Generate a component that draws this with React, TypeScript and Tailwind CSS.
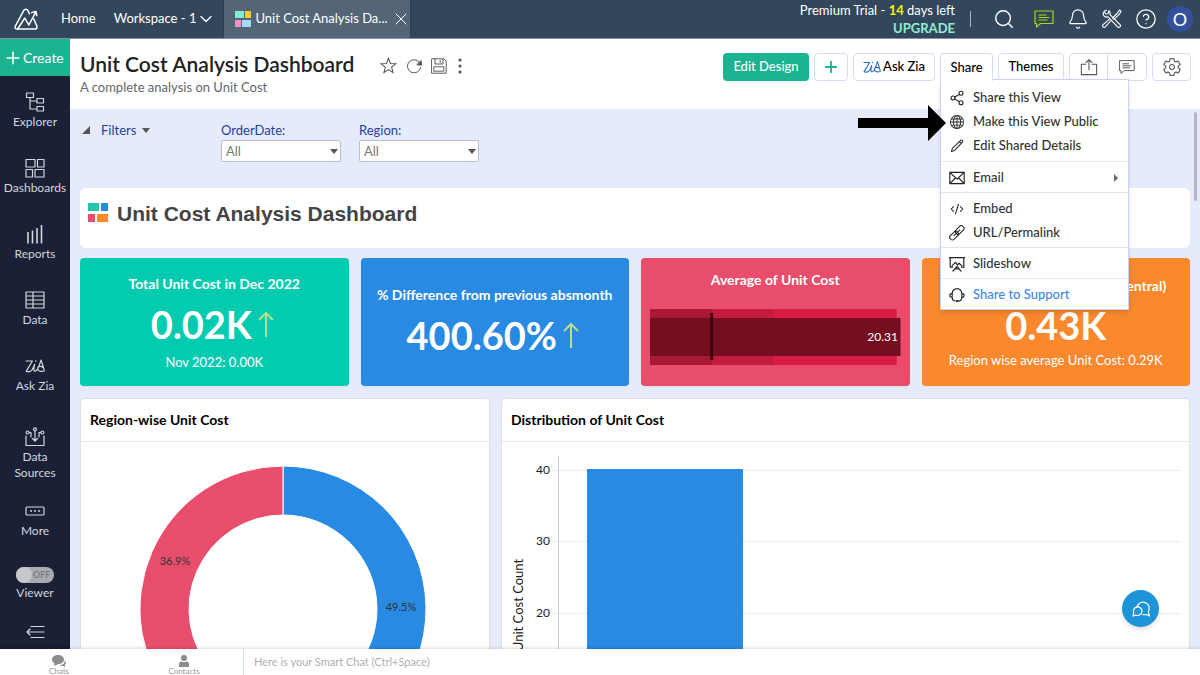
import React from "react";
import { Bell, ChevronDown, CircleHelp, CodeXml, Plus, Search, Share2, X } from "lucide-react";
import { BsGlobe } from "react-icons/bs";
import { IoSettingsOutline } from "react-icons/io5";

type IconProps = { className?: string };

function Svg({
  className,
  box = "0 0 20 20",
  children,
}: IconProps & { box?: string; children: React.ReactNode }) {
  return (
    <svg
      viewBox={box}
      fill="none"
      stroke="currentColor"
      strokeWidth="1.2"
      strokeLinejoin="round"
      strokeLinecap="round"
      className={className}
      aria-hidden="true"
    >
      {children}
    </svg>
  );
}

const LogoIcon = () => (
  <Svg box="0 0 24 22" className="h-[22px] w-6">
    <path
      strokeWidth="1.5"
      d="M19.800 11 22.800 18C23.400 19.800 22.600 21 21 21H3.200C1.200 21 .6 19.600 1.400 18L9.800 2.400C10.600.8 13 .8 13.800 2.400L15.400 5.800"
    />
    <path strokeWidth="1.500" d="M4 20.500 10.800 10 14.800 17 21.400 4.800M17.800 4.600 22 3.600 22.800 7.600" />
  </Svg>
);

const TilesIcon = ({ className }: IconProps) => (
  <svg viewBox="0 0 20 20" className={className} aria-hidden="true">
    <rect x="0" y="1" width="11" height="8" fill="#1fc8ad" />
    <rect x="13" y="1" width="7" height="8" fill="#288ae2" />
    <rect x="0" y="12" width="7" height="8" fill="#e84e6c" />
    <rect x="9" y="12" width="11" height="8" fill="#fa882d" />
  </svg>
);

const ZiaIcon = ({ className }: IconProps) => (
  <Svg box="0 0 20 16" className={className}>
    <path d="M1 3H7.400L1.200 13.400C4.600 14.600 7 13.200 8.200 9.800L9.600 6.400C8.600 10.600 8.400 13.600 10.400 13.200 13 12.600 14.200 8 16 2 17.200 5.600 18.800 9.800 19.200 13 15.400 14.200 12.200 12.600 12.600 10.200 13 8 16.200 7.800 18 9.600" />
    <path strokeWidth="1.500" d="M10.800 2.900v.1" />
  </Svg>
);

const ExplorerIcon = () => (
  <Svg className="h-5 w-5">
    <path d="M1.5 1h7v4.500h-7zM12 6.500h6.500v4.500H12zM12 14.500h6.500v4.500H12zM5 5.500v11.500h7M5 9h7" />
  </Svg>
);

const DashboardsIcon = () => (
  <Svg className="h-5 w-5">
    <path d="M1 1.500h9v7.500H1zM12.500 1.500H19v7.500h-6.500zM1 11.500h6.500v7.500H1zM10 11.500h9v7.500h-9z" />
  </Svg>
);

const ReportsIcon = () => (
  <Svg className="h-5 w-5">
    <path strokeWidth="1.600" strokeLinecap="butt" d="M3 8v11.500M7.500 6.500v13M12 4v15.500M16.500 1v18.500" />
  </Svg>
);

const DataIcon = () => (
  <Svg className="h-5 w-5">
    <path d="M1 2h18v16H1zM1 6h18M1 10h18M1 14h18M8 2v16" />
  </Svg>
);

const SourcesIcon = () => (
  <Svg className="h-5 w-5">
    <path d="M1 9v9.500h18V9M10 4v10M7.500 11.500 10 14l2.500-2.500M4.400 5.500H6V10M15.600 5.500H14V10" />
    <circle cx="10" cy="2.300" r="1.500" />
    <circle cx="2.600" cy="5.500" r="1.500" />
    <circle cx="17.400" cy="5.500" r="1.500" />
  </Svg>
);

const MoreIcon = () => (
  <Svg className="h-5 w-5">
    <rect x="1" y="6" width="18" height="8" rx="1" />
    <path strokeWidth="1.800" d="M6 10h.1M10 10h.1M14 10h.1" />
  </Svg>
);

const CommentIcon = ({ className }: IconProps) => (
  <Svg className={className}>
    <path d="M1 2h18v12.500H6.500L2.500 18v-3.500H1zM5 6h7M5 8.500h10M5 11h8" />
  </Svg>
);

const ToolsIcon = () => (
  <Svg className="h-5 w-5">
    <path
      strokeWidth="1.100"
      d="M4.500 1.200a4 4 0 0 0-3.300 4.600 4 4 0 0 0 4.800 2L15.600 17.800a1.600 1.600 0 0 0 2.400-2.200L8 5.600a4 4 0 0 0-1.200-4L6.200 4.500 4 5 2.800 3.500M17.500 1l1.500 1.500-2 3.200-5 4.600-1.300-1.300 4.700-5zM8.500 12l-5.200 5.900a1.500 1.500 0 0 1-2.200-2.200L7 10.600"
    />
  </Svg>
);

const StarIcon = () => (
  <Svg className="h-[17px] w-[17px]">
    <path strokeWidth="1.200" strokeLinejoin="miter" d="M10 1.500 12.300 7.600 18.800 7.900 13.700 12 15.400 18.300 10 14.700 4.600 18.300 6.300 12 1.200 7.900 7.700 7.600z" />
  </Svg>
);

const RefreshIcon = () => (
  <Svg className="h-4 w-4">
    <path strokeWidth="1.200" d="M17.500 6.500A8.300 8.300 0 1 0 18.300 12" />
    <path fill="currentColor" d="m19 3.500.3 5.500-5.300-.6z" />
  </Svg>
);

const SaveIcon = () => (
  <Svg className="h-4 w-4">
    <path strokeWidth="1.200" d="M1 1h15l3 3v15H1zM5 1v6.500h10V1M11.500 3v2.500M4 11h12v5.500H4z" />
  </Svg>
);

const ExportIcon = () => (
  <Svg className="h-[18px] w-[18px]">
    <path d="M6.500 7H1.500v11.500h17V7h-5M10 13V2M6.800 5 10 1.800 13.200 5" />
  </Svg>
);

const PencilIcon = () => (
  <Svg className="h-4 w-4">
    <path strokeWidth="1.300" d="M3 17l1.200-4L14.600 3c1.400-1.200 3.400.7 2.300 2.100L6.900 15.600zM13 4.600l2.200 2.200" />
  </Svg>
);

const LinkIcon = () => (
  <Svg className="h-4 w-4">
    <g transform="rotate(-45 10 10)" strokeWidth="1.300">
      <rect x="-1" y="6.500" width="12" height="6.500" rx="2.500" />
      <rect x="9" y="6.500" width="12" height="6.500" rx="2.500" />
      <path d="M5 9.800h10" />
    </g>
  </Svg>
);

const MailIcon = () => (
  <Svg className="h-4 w-4">
    <path strokeWidth="1.400" d="M1 3h18v14H1zM1 3l9 8.500L19 3M1 17l7-7M19 17l-7-7" />
  </Svg>
);

const SlideshowIcon = () => (
  <Svg className="h-4 w-4">
    <path strokeWidth="1.500" d="M4.500 14H1.500V2h17v12h-3M.5 2h19M4 12l4-4 2.500 3 2-2 3.500 3M10 13l-5 6M10 13l5 6M7.500 16h5" />
  </Svg>
);

const SupportIcon = () => (
  <Svg className="h-4 w-4">
    <path strokeWidth="1.400" d="M4 13V8a6 6 0 0 1 12 0v5M4 8c-4 .5-4 5 0 5M16 8c4 .5 4 5 0 5M16 13c0 3-2 4.500-4.500 4.500M4 13c0 2.500 1.500 4 3.500 4.500" />
    <circle cx="10" cy="17.500" r="1" fill="currentColor" />
  </Svg>
);

const navItems = [
  { label: "Explorer", icon: <ExplorerIcon /> },
  { label: "Dashboards", icon: <DashboardsIcon /> },
  { label: "Reports", icon: <ReportsIcon /> },
  { label: "Data", icon: <DataIcon /> },
  { label: "Ask Zia", icon: <ZiaIcon className="h-5 w-5" /> },
];

type MenuItem = {
  label: string;
  icon: React.ReactNode;
  arrow?: boolean;
  submenu?: boolean;
  highlight?: boolean;
};

const menuGroups: MenuItem[][] = [
  [
    { label: "Share this View", icon: <Share2 className="h-4 w-4" strokeWidth={1.6} /> },
    { label: "Make this View Public", icon: <BsGlobe className="h-3.5 w-3.5" />, arrow: true },
    { label: "Edit Shared Details", icon: <PencilIcon /> },
  ],
  [{ label: "Email", icon: <MailIcon />, submenu: true }],
  [
    { label: "Embed", icon: <CodeXml className="h-3.5 w-3.5" strokeWidth={1.8} /> },
    { label: "URL/Permalink", icon: <LinkIcon /> },
  ],
  [{ label: "Slideshow", icon: <SlideshowIcon /> }],
  [{ label: "Share to Support", icon: <SupportIcon />, highlight: true }],
];

function TopBar() {
  return (
    <header className="flex h-[39px] shrink-0 items-center border-b border-[#8793a3] bg-[#33475c] text-[13px] text-white">
      <a href="#" aria-label="Analytics home" className="ml-3.5">
        <LogoIcon />
      </a>
      <a href="#" className="ml-[23px]">
        Home
      </a>
      <button className="ml-[18px] flex items-center">
        Workspace - 1
        <ChevronDown className="h-5 w-5" strokeWidth={1.6} />
      </button>
      <div className="ml-[7px] flex h-full w-[188px] items-center border-x border-[#2b3d50] bg-[#536577] pl-[11px]">
        <svg viewBox="0 0 16 16" className="h-4 w-4 shrink-0" aria-hidden="true">
          <rect width="9" height="7" fill="#7eedcb" />
          <rect x="10" width="6" height="7" fill="#fac932" />
          <rect y="9" width="6" height="7" fill="#f58fc9" />
          <rect x="7" y="9" width="9" height="7" fill="#a6d8f7" />
        </svg>
        <span className="ml-1 whitespace-nowrap">Unit Cost Analysis Da...</span>
        <button aria-label="Close tab" className="ml-[3px]">
          <X className="h-5 w-5" strokeWidth={1.2} />
        </button>
      </div>

      <div className="ml-auto flex items-center">
        <div className="text-right leading-[18px]">
          <p>
            Premium Trial - <b className="text-[#f5f50a]">14</b> days left
          </p>
          <a href="#" className="block font-bold text-[#8ff0d0]">
            UPGRADE
          </a>
        </div>
        <span className="ml-[15px] h-4 w-px bg-[#a8b2bd]" />
        <button aria-label="Search" className="ml-[22px]">
          <Search className="h-[22px] w-[22px]" strokeWidth={1.6} />
        </button>
        <button aria-label="Messages" className="ml-[19px] text-[#a5d610]">
          <CommentIcon className="h-5 w-5" />
        </button>
        <button aria-label="Notifications" className="ml-[13px]">
          <Bell className="h-[22px] w-[22px]" strokeWidth={1.3} />
        </button>
        <button aria-label="Tools" className="ml-[13px]">
          <ToolsIcon />
        </button>
        <button aria-label="Help" className="ml-[13px]">
          <CircleHelp className="h-[22px] w-[22px]" strokeWidth={1.4} />
        </button>
        <button className="mr-[7px] ml-[10px] h-[26px] w-[26px] rounded-full bg-[#33509c] text-lg leading-none">
          O
        </button>
      </div>
    </header>
  );
}

function NavLink({ label, icon }: { label: string; icon: React.ReactNode }) {
  return (
    <a href="#" className="flex flex-col items-center gap-0.5 text-center text-xs leading-4">
      {icon}
      {label}
    </a>
  );
}

function Sidebar() {
  return (
    <aside className="flex w-[70px] shrink-0 flex-col overflow-hidden bg-[#1a2035] text-[#d3d6dc]">
      <button className="flex h-[37px] shrink-0 items-center bg-[#1cb391] pl-[3px] text-sm text-white">
        <Plus className="h-5 w-5" strokeWidth={1.8} />
        Create
      </button>
      <nav className="flex flex-col px-1 pt-4">
        <div className="flex flex-col gap-7">
          {navItems.map((item) => (
            <NavLink key={item.label} {...item} />
          ))}
        </div>
        <div className="mt-[33px] flex flex-col gap-5">
          <NavLink label="Data Sources" icon={<SourcesIcon />} />
          <NavLink label="More" icon={<MoreIcon />} />
        </div>
      </nav>
      <label className="mt-7 flex flex-col items-center gap-0.5 text-xs leading-4">
        <input type="checkbox" className="peer sr-only" />
        <span className="flex h-4 w-[38px] items-center rounded-full bg-[#a9abb0] text-[9px] text-[#6d7077]">
          <span className="mr-px h-4 w-4 shrink-0 rounded-full bg-[#c6c7ca]" />
          OFF
        </span>
        Viewer
      </label>
      <button aria-label="Collapse menu" className="mx-auto mt-[21px]">
        <Svg className="h-5 w-5">
          <path d="M6 4.500h13M2 10h17M6 15.500h13M5 7l-3 3 3 3" />
        </Svg>
      </button>
    </aside>
  );
}

function ShareMenu() {
  return (
    <div
      role="menu"
      className="absolute top-[26px] left-0 z-10 w-[189px] border border-[#c9d3f0] bg-white text-[13px] text-[#333] shadow-md"
    >
      {menuGroups.map((group, index) => (
        <div key={index} className="border-t border-[#e6e6e6] pt-1 pb-0.5 first:border-t-0 first:pt-1.5 first:pb-[3px]">
          {group.map((item) => (
            <button
              key={item.label}
              role="menuitem"
              className={
                item.highlight
                  ? "relative flex h-6 w-full items-center gap-2 px-2 text-[#3f87e5]"
                  : "relative flex h-6 w-full items-center gap-2 px-2"
              }
            >
              <span className="flex w-4 justify-center text-[#222]">{item.icon}</span>
              {item.label}
              {item.submenu && (
                <svg viewBox="0 0 4 8" className="mr-0.5 ml-auto h-2 w-1" aria-hidden="true">
                  <path d="M0 0 4 4 0 8z" fill="#666" />
                </svg>
              )}
              {item.arrow && (
                <svg viewBox="0 0 88 36" className="absolute top-[-5px] right-[182px] h-9 w-[88px]" aria-hidden="true">
                  <path d="M0 13H70V0L88 18 70 36V23H0z" fill="#000" />
                </svg>
              )}
            </button>
          ))}
        </div>
      ))}
    </div>
  );
}

function Toolbar() {
  return (
    <div className="flex h-7 items-stretch gap-[5px] text-[13px] font-medium text-black">
      <button className="w-[86px] rounded-sm bg-[#1cb391] text-white">Edit Design</button>
      <button aria-label="Add" className="flex w-[34px] items-center justify-center rounded-sm border border-[#d5dcf3] text-[#1cb391]">
        <Plus className="h-[18px] w-[18px]" strokeWidth={2.5} />
      </button>
      <button className="flex w-[82px] items-center justify-center gap-0.5 rounded-sm border border-[#d5dcf3]">
        <ZiaIcon className="h-4 w-[18px] text-[#2c6cc4]" />
        Ask Zia
      </button>
      <div className="relative flex">
        <button aria-haspopup="menu" className="relative z-20 w-[53px] rounded-t-sm border border-b-0 border-[#d5dcf3] bg-white">
          Share
        </button>
        <ShareMenu />
      </div>
      <button className="w-[66px] rounded-sm border border-[#d5dcf3]">Themes</button>
      <div className="flex rounded-sm border border-[#d5dcf3] text-[#555]">
        <button aria-label="Export" className="flex w-[38px] items-center justify-center border-r border-[#d5dcf3]">
          <ExportIcon />
        </button>
        <button aria-label="Comments" className="flex w-[38px] items-center justify-center">
          <CommentIcon className="h-4 w-4" />
        </button>
      </div>
      <button aria-label="Settings" className="flex w-[39px] items-center justify-center rounded-sm border border-[#d5dcf3] text-[#666]">
        <IoSettingsOutline className="h-5 w-5" />
      </button>
    </div>
  );
}

function ViewHeader() {
  return (
    <div className="flex h-[70px] shrink-0 items-start bg-white pr-[9px] pl-[10px]">
      <div>
        <h1 className="mt-[11px] text-[21px] leading-7 font-semibold text-[#222]">Unit Cost Analysis Dashboard</h1>
        <p className="text-[13px] leading-[18px] text-[#666]">A complete analysis on Unit Cost</p>
      </div>
      <div className="mt-[18px] ml-[26px] flex items-center gap-[9px] text-[#555]">
        <button aria-label="Favourite">
          <StarIcon />
        </button>
        <button aria-label="Refresh">
          <RefreshIcon />
        </button>
        <button aria-label="Save">
          <SaveIcon />
        </button>
        <button aria-label="More options">
          <svg viewBox="0 0 4 16" className="ml-0.5 h-4 w-1" fill="currentColor" aria-hidden="true">
            <circle cx="2" cy="2" r="1.6" />
            <circle cx="2" cy="8" r="1.6" />
            <circle cx="2" cy="14" r="1.6" />
          </svg>
        </button>
      </div>
      <div className="mt-[14px] ml-auto">
        <Toolbar />
      </div>
    </div>
  );
}

function FilterSelect({ id, label }: { id: string; label: string }) {
  return (
    <div className="w-[120px]">
      <label htmlFor={id} className="block text-[13px] leading-5 text-[#27429b]">
        {label}
      </label>
      <div className="relative">
        <select
          id={id}
          className="block h-[22px] w-full appearance-none rounded-xs border border-[#b9bfd0] bg-white pl-1 text-[13px] leading-5 text-[#777]"
        >
          <option>All</option>
        </select>
        <svg viewBox="0 0 8 5" className="pointer-events-none absolute top-[9px] right-[3px] h-[5px] w-2" aria-hidden="true">
          <path d="M0 0h8L4 5z" fill="#555" />
        </svg>
      </div>
    </div>
  );
}

function Filters() {
  return (
    <div className="flex h-[68px] items-start">
      <svg viewBox="0 0 8 8" className="mt-1.5 ml-0.5 h-2 w-2" aria-hidden="true">
        <path d="M8 0v8H0z" fill="#555" />
      </svg>
      <button className="ml-[11px] flex w-[120px] items-center gap-1.5 text-[13px] leading-5 text-[#27429b]">
        Filters
        <svg viewBox="0 0 8 5" className="h-[5px] w-2" aria-hidden="true">
          <path d="M0 0h8L4 5z" fill="#555" />
        </svg>
      </button>
      <div className="flex gap-[18px]">
        <FilterSelect id="order-date" label="OrderDate:" />
        <FilterSelect id="region" label="Region:" />
      </div>
    </div>
  );
}

const TrendUp = () => (
  <svg viewBox="0 0 16 26" className="h-[26px] w-4" fill="none" stroke="#b5e08a" strokeWidth="2" aria-label="Up">
    <path d="M8 26V2M1 9l7-7 7 7" />
  </svg>
);

function KpiCard({
  title,
  value,
  note,
  up,
  color,
}: {
  title: string;
  value: string;
  note?: string;
  up?: boolean;
  color: string;
}) {
  return (
    <section className={`flex h-32 flex-col items-center justify-center rounded-sm text-white shadow-xs ${color}`}>
      <h2 className={note ? "text-sm leading-5 font-bold whitespace-nowrap" : "pt-1.5 text-sm leading-5 font-bold whitespace-nowrap"}>
        {title}
      </h2>
      <div className={up ? "flex h-[60px] items-center gap-1.5 pr-1" : "flex h-14 items-center pt-0.5"}>
        <strong className="text-[38px] leading-none font-bold">{value}</strong>
        {up && <TrendUp />}
      </div>
      {note && <p className="text-[13px] leading-4 whitespace-nowrap">{note}</p>}
    </section>
  );
}

function BulletCard() {
  return (
    <section className="flex h-32 flex-col rounded-sm bg-[#e84e6c] px-[9px] pt-3 text-white shadow-xs">
      <h2 className="text-center text-sm leading-5 font-bold">Average of Unit Cost</h2>
      <svg className="mt-[19px] h-14 w-full" aria-label="Average of Unit Cost 20.31">
        <rect width="98.500%" height="56" fill="#d71d44" />
        <rect width="49.300%" height="56" fill="#c41b3e" />
        <rect width="24.600%" height="56" fill="#a91935" />
        <rect y="9" width="100%" height="38" fill="#750e21" />
        <rect x="24%" y="4" width="3" height="47" fill="#3b0510" />
        <text x="99%" y="32" textAnchor="end" fill="#fff" className="text-xs">
          20.31
        </text>
      </svg>
    </section>
  );
}

function ChartPanel({ title, children }: { title: string; children: React.ReactNode }) {
  return (
    <section className="rounded-sm border border-[#dcdfe8] bg-white">
      <h2 className="border-b border-[#e5e5e5] px-[9px] text-sm leading-[42px] font-bold text-black">{title}</h2>
      {children}
    </section>
  );
}

const OUTER = 143;
const INNER = 94;

const slices = [
  { share: 49.5, color: "#288ae2" },
  { share: 13.6, color: "#fa882d" },
  { share: 36.9, color: "#e84e6c" },
];

function arc(from: number, to: number) {
  const point = (radius: number, pct: number) => {
    const angle = (pct / 100) * Math.PI * 2;
    return `${radius * Math.sin(angle)} ${-radius * Math.cos(angle)}`;
  };
  const large = to - from > 50 ? 1 : 0;
  return `M${point(OUTER, from)}A${OUTER} ${OUTER} 0 ${large} 1 ${point(OUTER, to)}L${point(INNER, to)}A${INNER} ${INNER} 0 ${large} 0 ${point(INNER, from)}Z`;
}

function DonutChart() {
  let start = 0;
  return (
    <svg viewBox="0 0 404 334" className="mx-auto h-[334px] w-[404px]" aria-label="Region-wise Unit Cost">
      <g transform="translate(200 167)">
        {slices.map((slice) => {
          const from = start;
          start += slice.share;
          return <path key={slice.color} d={arc(from, start)} fill={slice.color} stroke="#fff" />;
        })}
        <g fill="#333" textAnchor="middle" className="text-[11px]">
          <text x="-108" y="-44">36.9%</text>
          <text x="118" y="2">49.5%</text>
        </g>
      </g>
    </svg>
  );
}

const ticks = [
  { label: 40, y: 28 },
  { label: 30, y: 99 },
  { label: 20, y: 171 },
  { label: 10, y: 243 },
];

function Histogram() {
  return (
    <svg className="h-[334px] w-full" aria-label="Distribution of Unit Cost">
      {ticks.map((tick) => (
        <g key={tick.label}>
          <line x1="50" x2="98.800%" y1={tick.y + 0.5} y2={tick.y + 0.5} stroke="#ececec" />
          <text x="48" y={tick.y + 4} textAnchor="end" fill="#222" className="text-xs">
            {tick.label}
          </text>
        </g>
      ))}
      <line x1="56.500" x2="56.500" y1="14" y2="315" stroke="#cfcfcf" />
      <rect x="85" y="27" width="156" height="288" fill="#288ae2" />
      <text transform="translate(21 163) rotate(-90)" textAnchor="middle" fill="#222" className="text-[13px]">
        Unit Cost Count
      </text>
    </svg>
  );
}

function SmartBar() {
  return (
    <footer className="z-20 flex h-[26px] shrink-0 bg-white text-[#999] shadow-[0_-1px_3px_rgba(0,0,0,0.15)]">
      <div className="flex w-[244px] border-r border-[#ddd] text-[8px] leading-2">
        <button className="flex w-[118px] flex-col items-center justify-end">
          <svg viewBox="0 0 14 12" className="h-3 w-3.5" fill="#8c8c8c" aria-hidden="true">
            <path d="M6 0c3.400 0 6 2 6 4.600S9.400 9.300 6 9.300L2 11l.7-2.500C1 7.700 0 6.300 0 4.600 0 2 2.600 0 6 0zM13 5c1.400 1.600 1.200 3.600-.2 4.800L13.500 12l-3-1.200c-1 .2-2 .1-2.900-.3C11 10 13 8 13 5z" />
          </svg>
          Chats
        </button>
        <button className="ml-[7px] flex w-[118px] flex-col items-center justify-end">
          <svg viewBox="0 0 12 12" className="h-3 w-3" fill="#8c8c8c" aria-hidden="true">
            <circle cx="6" cy="3" r="3" />
            <path d="M1 12V9c0-1.600 1-2.400 2.400-2.600C4.800 7.300 7.200 7.300 8.600 6.400 10 6.600 11 7.400 11 9v3z" />
          </svg>
          Contacts
        </button>
      </div>
      <input
        aria-label="Smart Chat"
        placeholder="Here is your Smart Chat (Ctrl+Space)"
        className="flex-1 px-[10px] text-[11px] outline-none placeholder:text-[#b0b0b0]"
      />
    </footer>
  );
}

export default function App() {
  return (
    <div className="flex h-screen flex-col overflow-hidden bg-[#e6ebfb] font-[Lato,sans-serif]">
      <TopBar />
      <div className="flex min-h-0 flex-1">
        <Sidebar />
        <main className="relative flex min-w-0 flex-1 flex-col">
          <ViewHeader />

          <div className="min-h-0 flex-1 overflow-hidden px-[10px] pt-[11px]">
            <Filters />

            <div className="flex h-[60px] items-start gap-[9px] rounded-md bg-white pt-[14px] pl-2">
              <TilesIcon className="h-5 w-5" />
              <h2 className="font-[Liberation_Sans,Arial,sans-serif] text-[21px] leading-6 font-bold text-[#444]">
                Unit Cost Analysis Dashboard
              </h2>
            </div>

            <div className="mt-[10px] grid grid-cols-4 gap-3">
              <KpiCard title="Total Unit Cost in Dec 2022" value="0.02K" note="Nov 2022: 0.00K" up color="bg-[#02cbb0]" />
              <KpiCard title="% Difference from previous absmonth" value="400.60%" up color="bg-[#288ae2]" />
              <BulletCard />
              <KpiCard
                title="Latest Unit Cost by Region (Central)"
                value="0.43K"
                note="Region wise average Unit Cost: 0.29K"
                color="bg-[#fa882d]"
              />
            </div>

            <div className="mt-3 grid grid-cols-[410fr_689fr] gap-[11px]">
              <ChartPanel title="Region-wise Unit Cost">
                <DonutChart />
              </ChartPanel>
              <ChartPanel title="Distribution of Unit Cost">
                <Histogram />
              </ChartPanel>
            </div>
          </div>

          {/* Scroll thumb */}
          <span className="absolute top-[73px] right-[3px] h-[89px] w-[3px] rounded-full bg-[#b3b6c2]" />

          <button
            aria-label="Open chat"
            className="absolute right-[41px] bottom-[22px] flex h-[37px] w-[37px] items-center justify-center rounded-full bg-[#1d93d8] text-white shadow-md"
          >
            <Svg className="h-5 w-5">
              <path d="M6 8.500a6.200 6.200 0 1 1 11.300 4.300L18.500 17l-3.700-1.500c-.9.300-2 .4-3 .2" />
              <path d="M2 17l.8-3a4.300 4.300 0 1 1 2.400 2.200z" />
            </Svg>
          </button>
        </main>
      </div>
      <SmartBar />
    </div>
  );
}
